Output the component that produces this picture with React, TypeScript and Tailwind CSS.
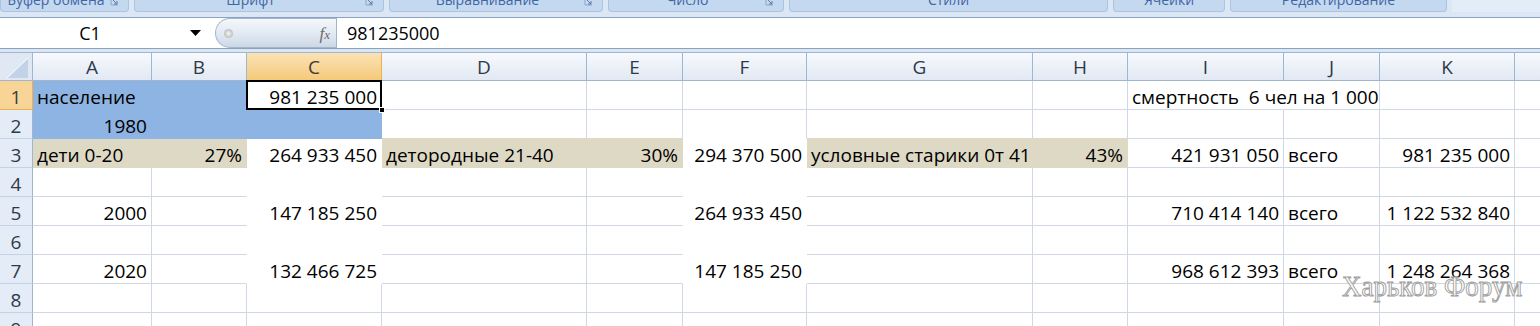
import React from 'react';

type Fill = 'b' | 't' | 'w' | null;

const COLS: { k: string; w: string }[] = [
  { k: 'A', w: 'w-[119px]' },
  { k: 'B', w: 'w-[95px]' },
  { k: 'C', w: 'w-[135px]' },
  { k: 'D', w: 'w-[205px]' },
  { k: 'E', w: 'w-[96px]' },
  { k: 'F', w: 'w-[124px]' },
  { k: 'G', w: 'w-[226px]' },
  { k: 'H', w: 'w-[95px]' },
  { k: 'I', w: 'w-[156px]' },
  { k: 'J', w: 'w-[96px]' },
  { k: 'K', w: 'w-[135px]' },
  { k: 'L', w: 'w-[120px]' },
];

const BG: Record<string, string> = {
  b: 'bg-[#8db4e2]',
  t: 'bg-[#ddd9c4]',
  w: 'bg-white',
};
const BR: Record<string, string> = {
  b: 'border-r-[#8db4e2]',
  t: 'border-r-[#ddd9c4]',
  w: 'border-r-white',
  g: 'border-r-[#d0d7e5]',
  n: 'border-r-transparent',
};
const BB: Record<string, string> = {
  b: 'border-b-[#8db4e2]',
  t: 'border-b-[#ddd9c4]',
  w: 'border-b-white',
  g: 'border-b-[#d0d7e5]',
};

function fillAt(r: number, c: number): Fill {
  if ((r === 1 || r === 2) && c <= 1) return 'b';
  if (r === 2 && c === 2) return 'b';
  if (r === 3 && [0, 1, 3, 4, 6, 7].includes(c)) return 't';
  if (r >= 3 && r <= 7 && (c === 2 || c === 5)) return 'w';
  return null;
}

const DATA: Record<string, [string, 'l' | 'r']> = {
  A1: ['население', 'l'],
  C1: ['981 235 000', 'r'],
  I1: ['смертность  6 чел на 1 000', 'l'],
  A2: ['1980', 'r'],
  A3: ['дети 0-20', 'l'],
  B3: ['27%', 'r'],
  C3: ['264 933 450', 'r'],
  D3: ['детородные 21-40', 'l'],
  E3: ['30%', 'r'],
  F3: ['294 370 500', 'r'],
  G3: ['условные старики 0т 41', 'l'],
  H3: ['43%', 'r'],
  I3: ['421 931 050', 'r'],
  J3: ['всего', 'l'],
  K3: ['981 235 000', 'r'],
  A5: ['2000', 'r'],
  C5: ['147 185 250', 'r'],
  F5: ['264 933 450', 'r'],
  I5: ['710 414 140', 'r'],
  J5: ['всего', 'l'],
  K5: ['1 122 532 840', 'r'],
  A7: ['2020', 'r'],
  C7: ['132 466 725', 'r'],
  F7: ['147 185 250', 'r'],
  I7: ['968 612 393', 'r'],
  J7: ['всего', 'l'],
  K7: ['1 248 264 368', 'r'],
};

const GROUPS: { label: string; w: string; launcher: boolean }[] = [
  { label: 'Буфер обмена', w: 'w-[129px]', launcher: true },
  { label: 'Шрифт', w: 'w-[250px]', launcher: true },
  { label: 'Выравнивание', w: 'w-[214px]', launcher: true },
  { label: 'Число', w: 'w-[176px]', launcher: true },
  { label: 'Стили', w: 'w-[319px]', launcher: false },
  { label: 'Ячейки', w: 'w-[112px]', launcher: false },
  { label: 'Редактирование', w: 'w-[217px]', launcher: false },
];

function Launcher() {
  return (
    <svg width="9" height="9" viewBox="0 0 9 9" className="absolute right-[9px] top-[-3px]">
      <path d="M1 1 V8 H8" fill="none" stroke="#8aa6c8" strokeWidth="1" />
      <path d="M3 3 L7 7 M7 4 V7 H4" fill="none" stroke="#5a7ba6" strokeWidth="1" />
    </svg>
  );
}

function Ribbon() {
  return (
    <div className="h-[17px] bg-[#dbe7f5] flex gap-[5px] overflow-hidden">
      {GROUPS.map((g) => (
        <div
          key={g.label}
          className={`${g.w} shrink-0 h-[12px] relative bg-[#c4d8f0] border-x border-b border-[#adc4e1] rounded-b-[4px] overflow-hidden flex justify-center ${g.launcher ? 'pr-[17px]' : ''}`}
        >
          <span className="text-[14px] leading-[14px] mt-[-7px] text-[#3f66a3] whitespace-nowrap">{g.label}</span>
          {g.launcher && <Launcher />}
        </div>
      ))}
      <div className="flex-1 h-[12px] bg-[#e3edf8]" />
    </div>
  );
}

function FormulaBar() {
  return (
    <div className="h-[32px] border-y border-[#8aa2bf] bg-white flex">
      <div className="w-[180px] shrink-0 flex items-center justify-center text-[18px] text-black">C1</div>
      <div className="w-[35px] shrink-0 flex items-center justify-start pl-[10px]">
        <svg width="11" height="6" viewBox="0 0 11 6">
          <polygon points="0,0 11,0 5.5,6" fill="#000" />
        </svg>
      </div>
      <div className="w-[121px] shrink-0 h-[30px] rounded-l-[15px] border border-r-0 border-[#a3b6cc] bg-linear-to-b from-[#f4f7fb] via-[#e3eaf3] to-[#cdd8e6] flex items-center justify-between pl-[8px] pr-[6px]">
        <div className="w-[9px] h-[9px] rounded-full bg-radial from-[#f5f5f5] to-[#a9a9a9]" />
        <span className="font-['Liberation_Serif',serif] italic text-[17px] text-[#6b6b6b] leading-none">
          f<span className="text-[13px]">x</span>
        </span>
      </div>
      <div className="flex-1 border-l border-[#a3b6cc] flex items-center pl-[10px] text-[18px] text-black">981235000</div>
    </div>
  );
}

function HeaderRow() {
  return (
    <div className="flex h-[29px] border-t border-[#9eb6ce]">
      <div className="w-[33px] shrink-0 border-r border-b border-[#9eb6ce] bg-[#dfe8f3] relative">
        <svg width="32" height="27" viewBox="0 0 32 27" className="absolute left-0 top-0">
          <polygon points="7,25 28,5 28,25" fill="#c3d3e7" />
          <line x1="7" y1="25" x2="28" y2="5" stroke="#ffffff" strokeWidth="1" />
        </svg>
      </div>
      {COLS.map((c) => {
        const sel = c.k === 'C';
        return (
          <div
            key={c.k}
            className={`${c.w} shrink-0 border-r border-b text-center text-[19px] leading-[25px] pt-[2px] ${
              sel
                ? 'bg-linear-to-b from-[#fbe3b5] to-[#f5c979] border-[#f2b04a] text-[#3c3c3c]'
                : 'bg-linear-to-b from-[#f7f9fd] to-[#e2e9f3] border-[#9eb6ce] text-[#2d3a48]'
            }`}
          >
            {c.k}
          </div>
        );
      })}
    </div>
  );
}

function GridRow({ r }: { r: number }) {
  const selRow = r === 1;
  return (
    <div className="flex h-[29px]">
      <div
        className={`w-[33px] shrink-0 h-[29px] border-r border-b text-center text-[19px] leading-[24px] pt-[4px] ${
          selRow
            ? 'bg-[#f8d596] border-r-[#f2b04a] border-b-[#f2b04a] text-[#3c3c3c]'
            : 'bg-[#e4ecf7] border-r-[#9eb6ce] border-b-[#c3d2e4] text-[#2d3a48]'
        }`}
      >
        {r}
      </div>
      {COLS.map((c, ci) => {
        const f = fillAt(r, ci);
        const right = fillAt(r, ci + 1);
        const below = fillAt(r + 1, ci);
        const key = `${c.k}${r}`;
        const rKey = key === 'I1' ? 'n' : f ?? right ?? 'g';
        const bKey = f ?? below ?? 'g';
        const d = DATA[key];
        return (
          <div
            key={key}
            className={`relative ${c.w} shrink-0 h-[29px] border-r border-b ${f ? BG[f] : ''} ${BR[rKey]} ${BB[bKey]} text-[19px] leading-[24px] pt-[4px] px-[4px] whitespace-pre text-black ${
              d && d[1] === 'r' ? 'text-right' : 'text-left'
            }`}
          >
            {d ? d[0] : ''}
            {key === 'C1' && (
              <>
                <div className="absolute left-[-1px] top-[-1px] right-[-1px] bottom-[-1px] border-[2px] border-black z-10 pointer-events-none" />
                <div className="absolute right-[-4px] bottom-[-4px] w-[6px] h-[6px] bg-black border border-white z-20" />
              </>
            )}
          </div>
        );
      })}
    </div>
  );
}

export default function App() {
  return (
    <div className="w-[1540px] h-[326px] overflow-hidden bg-white relative font-['Open_Sans',sans-serif]">
      <Ribbon />
      <FormulaBar />
      <div className="h-[3px] bg-[#dbe6f3]" />
      <HeaderRow />
      {[1, 2, 3, 4, 5, 6, 7, 8, 9].map((r) => (
        <GridRow key={r} r={r} />
      ))}
      <div className="absolute left-[1342px] top-[271px] origin-left scale-x-[0.9] font-['Liberation_Serif',serif] text-[30px] leading-none text-white/90 [-webkit-text-stroke:1px_#a0a0a0] whitespace-nowrap pointer-events-none">
        Харьков Форум
      </div>
    </div>
  );
}
